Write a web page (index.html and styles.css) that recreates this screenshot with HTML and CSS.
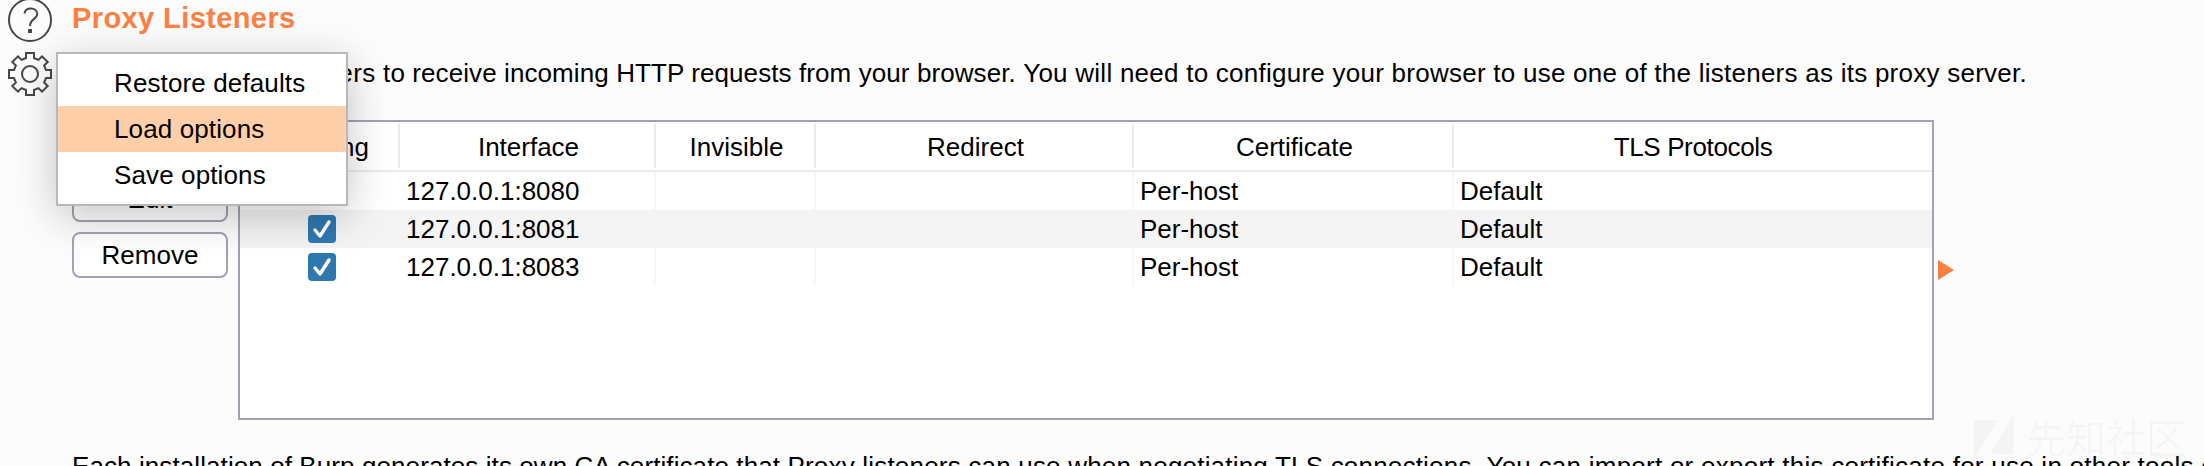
FILE: index.html
```html
<!DOCTYPE html>
<html lang="en">
<head>
<meta charset="utf-8">
<title>Proxy Listeners</title>
<link rel="stylesheet" href="styles.css">
</head>
<body>
<main class="panel">
  <aside class="tools">
    <svg class="icon" viewBox="-22 -22 44 44"><circle r="21"/><path d="M-5.5-6.500C-5-10-3-11.500 0.800-11.500C4.500-11.500 7.300-9.500 7.300-6C7.300-1 0-1 0 6"/><rect class="dot" x="-2" y="9" width="4" height="4"/></svg>
    <svg class="icon" viewBox="-22 -22 44 44"><path d="M-4-16V-21H4V-16L8.500-14.100L12-17.700L17.700-12L14.100-8.500L16-4H21V4H16L14.100 8.500L17.700 12L12 17.700L8.500 14.100L4 16V21H-4V16L-8.500 14.100L-12 17.700L-17.700 12L-14.100 8.500L-16 4H-21V-4H-16L-14.100-8.500L-17.700-12L-12-17.700L-8.500-14.100Z"/><circle r="8"/></svg>
  </aside>
  <section class="content">
    <h1 class="title">Proxy Listeners</h1>
    <p class="intro"><span class="wider">Burp Proxy uses listeners </span><span class="snug">to receive incoming HTTP requests from your browser. </span><span class="wide">You will need to configure your browser to use one of the listeners as its proxy server.</span></p>
    <div class="work">
      <div class="buttons">
        <button class="btn">Add</button>
        <button class="btn">Edit</button>
        <button class="btn">Remove</button>
      </div>
      <div class="table">
        <div class="row head"><div>Running</div><div>Interface</div><div>Invisible</div><div>Redirect</div><div>Certificate</div><div class="tight">TLS Protocols</div></div>
        <div class="row"><div class="check"></div><div>127.0.0.1:8080</div><div></div><div></div><div>Per-host</div><div>Default</div></div>
        <div class="row alt"><div class="check"><svg class="box" viewBox="0 0 28 28"><path d="M7 15L12 21L21 7"/></svg></div><div>127.0.0.1:8081</div><div></div><div></div><div>Per-host</div><div>Default</div></div>
        <div class="row"><div class="check"><svg class="box" viewBox="0 0 28 28"><path d="M7 15L12 21L21 7"/></svg></div><div>127.0.0.1:8083</div><div></div><div></div><div>Per-host</div><div>Default</div></div>
      </div>
      <svg class="arrow" viewBox="0 0 16 20"><path d="M0 0L16 10L0 20Z"/></svg>
    </div>
    <p class="note"><span class="snug">Each installation of Burp generates its own CA certificate that </span><span class="medium">Proxy listeners can use when negotiating TLS connections. </span><span class="wide">You can import or export this certificate for use in other tools or another installation of Burp.</span></p>
  </section>
  <div class="menu">
    <div class="item">Restore defaults</div>
    <div class="item active">Load options</div>
    <div class="item">Save options</div>
  </div>
  <div class="watermark">
    <svg class="mark" viewBox="0 0 40 46"><path d="M0 7H24L0 46ZM40 0V41H16Z"/></svg>
    <span>先知社区</span>
  </div>
</main>
</body>
</html>
```
FILE: styles.css
```css
* { box-sizing: border-box; }
body {
  margin: 0;
  background: #fcfcfc;
  color: #000;
  font: 26px/30px "Liberation Sans", Arial, sans-serif;
}
.panel {
  position: relative;
  display: flex;
  width: 2204px;
  height: 466px;
  overflow: hidden;
}
.tools {
  flex: 0 0 72px;
  display: flex;
  flex-direction: column;
  gap: 10px;
  padding-left: 8px;
  margin-top: -2px;
}
.icon {
  width: 44px;
  height: 44px;
  fill: none;
  stroke: #484744;
  stroke-width: 2;
}
.icon .dot { fill: #484744; stroke: none; }
.content { flex: 1; min-width: 0; white-space: nowrap; }
.title {
  margin: 0;
  height: 58px;
  padding-top: 2px;
  color: #ff7f42;
  font-size: 29px;
  line-height: 32px;
  letter-spacing: 0.4px;
}
.snug { letter-spacing: 0.09px; }
.medium { letter-spacing: 0.2px; }
.wide { letter-spacing: 0.25px; }
.wider { letter-spacing: 0.35px; }
.intro { margin: 0; height: 62px; }
.work { display: flex; height: 300px; }
.buttons {
  width: 166px;
  display: flex;
  flex-direction: column;
  gap: 10px;
}
.btn {
  width: 156px;
  height: 46px;
  padding: 0;
  border: 2px solid #a2a2b2;
  border-radius: 8px;
  background: #fff;
  color: #000;
  font: inherit;
}
.table {
  width: 1696px;
  border: 2px solid #a2a2b2;
  background: #fff;
}
.row {
  display: grid;
  grid-template-columns: 160px 256px 160px 318px 320px 1fr;
  height: 38px;
  line-height: 38px;
}
.row > div { padding-left: 6px; }
.row > div:nth-child(n+2):nth-child(-n+5) { border-right: 2px solid #f6f6f6; }
.row.alt { background: #f4f4f4; }
.row.alt > div:nth-child(n) { border-color: #f4f4f4; }
.row.head {
  height: 50px;
  line-height: 46px;
  padding: 2px 0;
  border-bottom: 2px solid #ebebeb;
  text-align: center;
}
.row.head > div { padding: 0 0 0 3px; height: 44px; }
.row.head > .tight { padding: 0; letter-spacing: -0.35px; }
.row.head > div:nth-child(n):nth-child(-n+5) { border-right: 2px solid #ebebeb; }
.row > .check { display: flex; align-items: center; justify-content: center; padding: 0 0 0 4px; }
.box {
  width: 28px;
  height: 28px;
  border-radius: 4px;
  background: #2e78b0;
  fill: none;
  stroke: #fff;
  stroke-width: 3.5;
  stroke-linecap: round;
  stroke-linejoin: round;
}
.arrow { width: 16px; height: 20px; margin: 140px 0 0 4px; fill: #ff7f42; }
.note { margin: 31px 0 0; }
.menu {
  position: absolute;
  left: 56px;
  top: 52px;
  width: 292px;
  height: 154px;
  padding: 6px 0;
  border: 2px solid #b8b8b8;
  background: #fff;
  box-shadow: 0 10px 40px rgba(0, 0, 0, 0.23);
}
.item { height: 46px; padding-left: 56px; line-height: 46px; letter-spacing: 0.12px; }
.item.active { background: #ffcfa9; }
.watermark {
  position: absolute;
  left: 1974px;
  top: 413px;
  display: flex;
  gap: 12px;
  color: rgba(0, 0, 0, 0.03);
  font: 40px/46px "Noto Sans CJK SC", sans-serif;
}
.mark { width: 40px; height: 46px; fill: rgba(0, 0, 0, 0.03); }
```
